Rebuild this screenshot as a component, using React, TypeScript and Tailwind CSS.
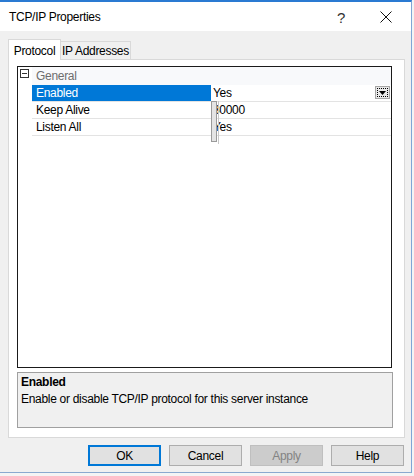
import React from "react";

function Row({ name, value, selected }: { name: string; value: string; selected?: boolean }) {
  return (
    <div className="flex h-[17px]">
      <div className="w-[14px] shrink-0 bg-white" />
      <div className="flex flex-1 border-b border-[#e3e3e3]">
        <div
          className={
            selected
              ? "w-[179px] shrink-0 bg-[#0078d7] text-white pl-[4px] leading-[16px]"
              : "w-[179px] shrink-0 text-black pl-[4px] leading-[16px]"
          }
        >
          {name}
        </div>
        <div className="flex-1 pl-[2px] leading-[16px] text-black relative">
          {value}
          {selected && (
            <div className="absolute right-[1px] top-[1px] w-[15px] h-[13px] bg-[#e9e9e9] border border-[#a6a6a6] flex items-center justify-center">
              <div className="w-[11px] h-[9px] border border-dotted border-black flex items-center justify-center">
                <svg width="7" height="4" viewBox="0 0 7 4">
                  <polygon points="0,0 7,0 3.5,4" fill="#000" />
                </svg>
              </div>
            </div>
          )}
        </div>
      </div>
    </div>
  );
}

function Btn({ label, primary, disabled }: { label: string; primary?: boolean; disabled?: boolean }) {
  const cls = primary
    ? "w-[73px] h-[21px] flex items-center justify-center bg-[#e1e1e1] border-2 border-[#0078d7] text-black"
    : disabled
    ? "w-[73px] h-[21px] flex items-center justify-center bg-[#cccccc] border border-[#bfbfbf] text-[#838383]"
    : "w-[73px] h-[21px] flex items-center justify-center bg-[#e1e1e1] border border-[#adadad] text-black";
  return <div className={cls}>{label}</div>;
}

export default function App() {
  return (
    <div className="w-[414px] h-[476px] bg-[#f4f4f4] font-['Liberation_Sans',Arial,sans-serif] text-[12px] tracking-[-0.3px] text-black">
      <div className="w-[412px] h-[473px] flex flex-col border-t-2 border-r border-b border-t-[#2a7ad2] border-r-[#7fa6d6] border-b-[#8aa9cf]">
        {/* title bar */}
        <div className="h-[29px] bg-white flex items-center shrink-0">
          <div className="pl-[9px] flex-1 pt-[1px]">TCP/IP Properties</div>
          <div className="w-[14px] text-[15px] text-[#333] mr-[29px] mt-[2px] leading-none tracking-normal">?</div>
          <svg width="12" height="12" viewBox="0 0 12 12" className="mr-[19px]">
            <path d="M0.5 0.5 L11.5 11.5 M11.5 0.5 L0.5 11.5" stroke="#111" strokeWidth="1" />
          </svg>
        </div>
        {/* body */}
        <div className="flex-1 bg-[#f0f0f0] flex flex-col pl-[8px] pt-[8px]">
          {/* tabs */}
          <div className="flex items-end h-[20px]">
            <div className="relative z-10 w-[53px] h-[21px] -mb-px bg-white border-l border-t border-r border-[#d9d9d9] flex items-start justify-center pt-[2px]">
              Protocol
            </div>
            <div className="w-[70px] h-[18px] bg-[#f0f0f0] border-t border-r border-[#d9d9d9] flex items-center justify-center">
              IP Addresses
            </div>
          </div>
          {/* panel */}
          <div className="w-[397px] h-[379px] bg-white border border-[#d9d9d9] pl-[8px] pt-[6px] flex flex-col">
            <div className="w-[375px] h-[302px] border border-[#1a1a1a] bg-white flex flex-col">
              {/* category */}
              <div className="flex h-[18px] bg-[#f8f9fb]">
                <div className="w-[14px] shrink-0 flex items-start pt-[2px] pl-[2px] bg-white">
                  <div className="w-[9px] h-[9px] border border-[#333] flex items-center justify-center bg-white">
                    <div className="w-[5px] h-px bg-[#333]" />
                  </div>
                </div>
                <div className="pl-[4px] leading-[18px] text-[#6d6d6d]">General</div>
              </div>
              <div className="relative">
                <Row name="Enabled" value="Yes" selected />
                <Row name="Keep Alive" value="30000" />
                <Row name="Listen All" value="Yes" />
                {/* rendering artifact overlay */}
                <div className="absolute left-[193px] top-[16px] w-[6px] h-[41px] bg-[#e4e4e4] border border-[#9a9a9a]" />
                <div className="absolute left-[200px] top-[16px] w-px h-[43px] bg-[#c8c8c8]" />
              </div>
            </div>
            <div className="mt-[4px] w-[376px] h-[56px] bg-[#f0f0f0] border border-[#a0a0a0] pl-[3px] pt-[2px]">
              <div className="font-bold leading-[15px]">Enabled</div>
              <div className="leading-[15px] mt-[2px]">Enable or disable TCP/IP protocol for this server instance</div>
            </div>
          </div>
          {/* buttons */}
          <div className="flex gap-[8px] pl-[80px] pt-[7px]">
            <Btn label="OK" primary />
            <Btn label="Cancel" />
            <Btn label="Apply" disabled />
            <Btn label="Help" />
          </div>
        </div>
      </div>
    </div>
  );
}
